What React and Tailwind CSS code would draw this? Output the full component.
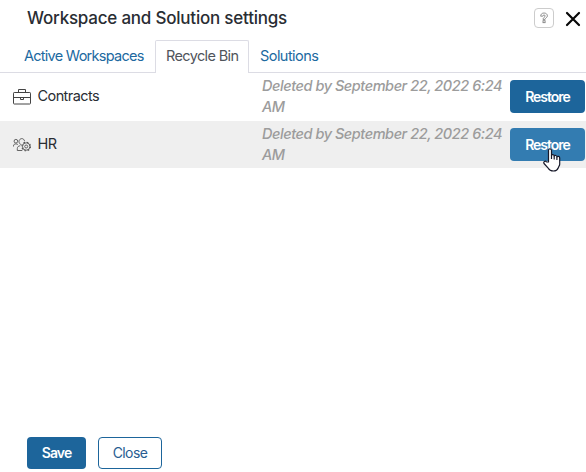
function HelpIcon() {
  return (
    <svg className="size-3" viewBox="0 0 12 12" fill="none" stroke="#777" strokeWidth="0.8">
      <path d="M2.7 4.2C2.7 2.2 4 1 6 1s3.4 1.2 3.4 2.9c0 1.8-2.2 2-2.3 3.5H5c0-2 2.2-2.3 2.2-3.4 0-.7-.5-1-1.2-1s-1.2.5-1.2 1.2z" />
      <rect x="5" y="8.7" width="2.1" height="2" />
    </svg>
  );
}

function BriefcaseIcon() {
  return (
    <svg className="h-[18px] w-[18px] shrink-0" viewBox="0 0 18 18" fill="none" stroke="#444" strokeWidth="1">
      <rect x="0.5" y="4.500" width="17" height="11.500" rx="0.700" />
      <path d="M5.500 4.500V1.500h7v3M.5 9.500h17M7.500 9.500v2h3v-2" />
    </svg>
  );
}

function TeamIcon() {
  return (
    <svg className="h-[14px] w-[18px] shrink-0" viewBox="0 0 18 14" fill="none" stroke="#555" strokeWidth="0.9">
      <circle cx="2.9" cy="3.2" r="1.8" />
      <path d="M.5 8.500V8c0-1.500 1-2.100 2.400-2.100 1 0 1.500.2 2 .7M11.600 3.200C11.200 1.500 10.200.6 8.800.6S6 1.800 6 3.500s1.200 3 2.400 3.200M4.300 12.500v-1.900c0-1.800 1.200-2.800 3-2.800M4.300 12.500h5" />
      <circle cx="13.200" cy="8.500" r="3.700" />
      <circle cx="13.200" cy="8.500" r="4.300" strokeWidth="1.100" strokeDasharray="1.700 1.677" />
      <circle cx="13.200" cy="8.500" r="1.500" />
    </svg>
  );
}

function HandCursor() {
  return (
    <svg className="pointer-events-none absolute top-[20px] left-[33px] h-[24px] w-[19px]" viewBox="0 0 19 24" fill="white" stroke="#17192a" strokeWidth="1.2" strokeLinejoin="round">
      <path d="M5.500 14V2.300c0-2 3-2 3 0v5c.4-1.100 2.700-.9 2.700.700.5-1 2.700-.7 2.700.8.700-.9 2.800-.5 2.800 1.200v6.200c0 1.500-1.300 2.700-1.600 4.100-.7 1.900-2.700 2.700-4.600 2.700-2.300 0-4.300-.8-5.300-2.800L1 15.500c-.9-1.800 1.200-3 2.500-1.700z" />
      <path d="M8.500 7v4M11.200 8v3.500M13.900 9v3" />
    </svg>
  );
}

const rows = [
  { name: 'Contracts', Icon: BriefcaseIcon, hovered: false },
  { name: 'HR', Icon: TeamIcon, hovered: true },
];

export default function App() {
  return (
    <div className="flex h-[472px] w-[586px] flex-col overflow-hidden bg-white font-['Inter','Liberation_Sans',sans-serif] text-[14.500px] text-[#292d33]">
      <header className="flex h-10 shrink-0 items-center justify-between pr-[5px] pb-1 pl-[27px]">
        <h1 className="text-[17px] leading-6 font-medium tracking-[-0.220px] whitespace-nowrap">Workspace and Solution settings</h1>
        <div className="flex items-center gap-[11px]">
          <button className="flex size-5 items-center justify-center rounded-[4px] border border-[#ccc]" aria-label="Help">
            <HelpIcon />
          </button>
          <button className="pt-px" aria-label="Close dialog">
            <svg className="block size-4" viewBox="0 0 16 16" stroke="#080808" strokeWidth="2.200" strokeLinecap="round">
              <path d="M2 2l12 12M14 2L2 14" />
            </svg>
          </button>
        </div>
      </header>
      <nav className="flex h-[33px] shrink-0 items-stretch border-b border-[#dcdce4] text-[#20699f]">
        <button className="w-[155px] pl-[24px] text-left tracking-[-0.730px] whitespace-nowrap">Active Workspaces</button>
        <button className="-mb-px w-[94px] rounded-t-[2px] border border-b-0 border-[#dcdce4] bg-white pb-0.5 text-left pl-[10px] tracking-[-0.630px] whitespace-nowrap text-[#50545b]">Recycle Bin</button>
        <button className="pl-[11px] tracking-[-0.550px] whitespace-nowrap">Solutions</button>
      </nav>
      <main className="flex-1 space-y-px">
        {rows.map(({ name, Icon, hovered }) => (
          <div key={name} className={`flex h-[47px] items-center pr-px pl-[13px] ${hovered ? 'bg-[#efefef]' : 'bg-white'}`}>
            <Icon />
            <span className="ml-[6.500px] w-[224.500px] pb-px tracking-[-0.580px]">{name}</span>
            <span className="w-[248px] pb-px leading-[21px] font-medium tracking-[-0.450px] text-[#9c9c9c] italic">Deleted by September 22, 2022 6:24 AM</span>
            <button className={`relative h-[33px] w-[75px] shrink-0 rounded-[4px] text-[14px] font-semibold tracking-[-1.020px] text-white ${hovered ? 'bg-[#337cb1]' : 'bg-[#1d659b]'}`}>
              Restore
              {hovered && <HandCursor />}
            </button>
          </div>
        ))}
      </main>
      <footer className="flex h-[35px] shrink-0 gap-3 pl-[27px] text-[14px]">
        <button className="h-8 w-[59px] rounded-[4px] bg-[#1d659b] pb-px font-semibold tracking-[-0.900px] text-white">Save</button>
        <button className="h-8 w-16 rounded-[4px] border border-[#1d659b] pb-px tracking-[-0.600px] text-[#285d91]">Close</button>
      </footer>
    </div>
  );
}
